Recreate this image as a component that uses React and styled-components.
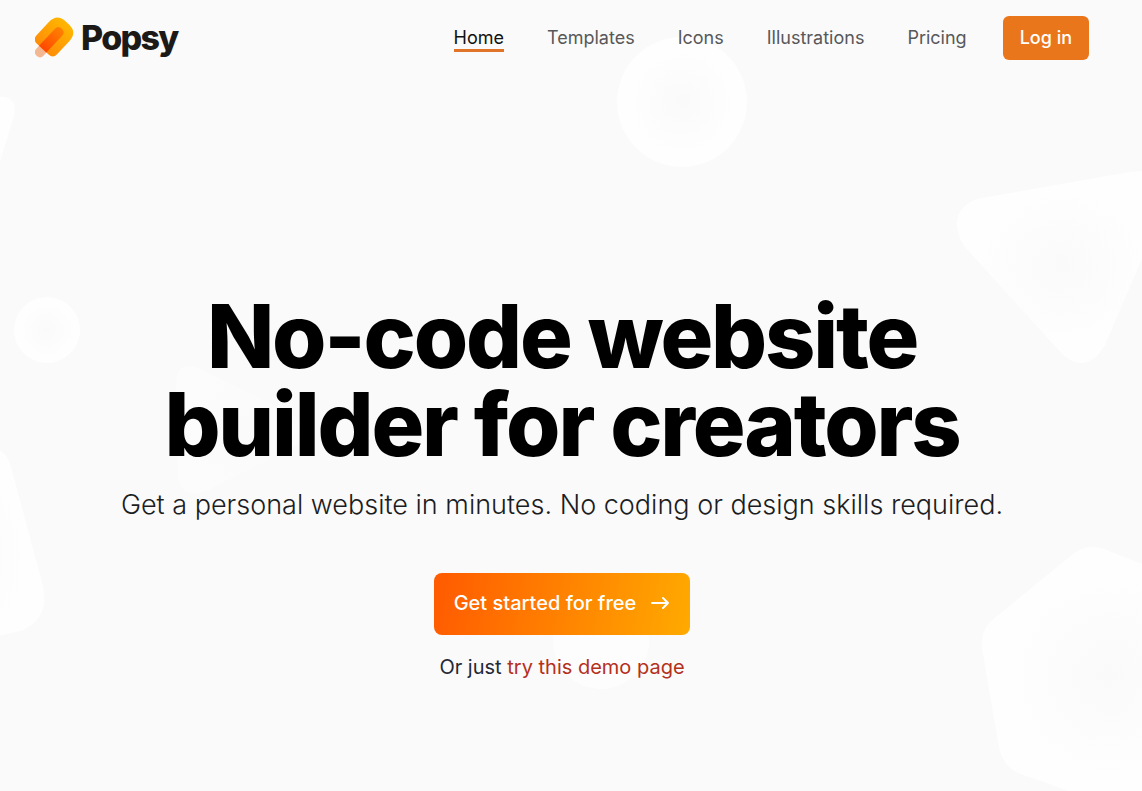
import React from "react";
import styled, { createGlobalStyle } from "styled-components";

const GlobalStyle = createGlobalStyle`
  *, *::before, *::after { box-sizing: border-box; }
  html { background: #fafafa; }
  body {
    margin: 0;
    font-family: Inter, "Liberation Sans", sans-serif;
    color: #1f2937;
  }
`;

const Page = styled.div`
  position: relative;
  min-height: 100vh;
  padding-right: 18px;
  overflow: hidden;
`;

const Backdrop = styled.svg`
  position: absolute;
  inset: 0;
  width: 100%;
  height: 100%;
`;

const Header = styled.header`
  position: relative;
  display: flex;
  align-items: center;
  justify-content: space-between;
  padding: 16px 35px 0;
`;

const Brand = styled.a`
  display: flex;
  align-items: center;
  gap: 5px;
  color: #1c1917;
  font-size: 34px;
  font-weight: 800;
  line-height: 44px;
  letter-spacing: -0.05em;
  text-decoration: none;
`;

const Nav = styled.nav`
  display: flex;
  align-items: center;
  gap: 43px;
`;

const NavLink = styled.a`
  padding-top: 3px;
  border-bottom: 3px solid ${(p) => (p.$active ? "#e0752a" : "transparent")};
  color: ${(p) => (p.$active ? "#111111" : "#57585a")};
  font-size: 18px;
  line-height: 22px;
  text-decoration: none;
`;

const LoginButton = styled.button`
  height: 44px;
  margin-left: -7px;
  padding: 0 17px;
  border: 0;
  border-radius: 6px;
  background: #ea761b;
  color: #fff;
  font: 500 18px/24px Inter, "Liberation Sans", sans-serif;
  cursor: pointer;
`;

const Hero = styled.main`
  position: relative;
  display: flex;
  flex-direction: column;
  align-items: center;
  padding: 232px 24px 48px;
  text-align: center;
`;

const Title = styled.h1`
  max-width: 900px;
  margin: 0;
  color: #000;
  font-size: 88px;
  font-weight: 800;
  line-height: 88px;
  letter-spacing: -0.025em;
`;

const Subtitle = styled.p`
  margin: 17px 0 48px;
  color: #1c1d1f;
  font-size: 27px;
  font-weight: 300;
  line-height: 40px;
`;

const StartButton = styled.button`
  display: flex;
  align-items: center;
  gap: 14px;
  height: 62px;
  padding: 0 20px 2px;
  border: 0;
  border-radius: 8px;
  background: linear-gradient(100deg, #ff5a00, #ffaa00);
  color: #fff;
  font: 500 20px/28px Inter, "Liberation Sans", sans-serif;
  cursor: pointer;
`;

const DemoNote = styled.p`
  margin: 18px 0 0;
  font-size: 20px;
  line-height: 28px;
`;

const DemoLink = styled.a`
  color: #b5301a;
  text-decoration: none;
`;

const links = ["Home", "Templates", "Icons", "Illustrations", "Pricing"];

function Shapes() {
  return (
    <Backdrop viewBox="0 0 1142 791" preserveAspectRatio="xMidYMin slice" aria-hidden="true">
      <defs>
        <radialGradient id="glow">
          <stop offset="0" stopColor="#fafafa" />
          <stop offset="0.8" stopColor="#fefefe" />
          <stop offset="1" stopColor="#fefefe" />
        </radialGradient>
        <radialGradient id="faint">
          <stop offset="0" stopColor="#fafafa" />
          <stop offset="1" stopColor="#fcfcfc" />
        </radialGradient>
      </defs>
      <circle cx="682" cy="102" r="65" fill="url(#glow)" />
      <circle cx="47" cy="330" r="33" fill="url(#glow)" />
      <circle cx="601" cy="641" r="48" fill="#fdfdfd" />
      <path d="M0 97Q18 96 14 116L0 162Z" fill="#fefefe" />
      <path d="M976 199L1130 172Q1172 166 1165 205L1105 345Q1088 374 1064 356L964 246Q945 213 976 199Z" fill="url(#glow)" />
      <path d="M176 385Q176 360 198 368L288 412Q316 428 292 448L208 490Q180 502 178 474Z" fill="url(#faint)" />
      <path d="M-130 460L-10 448Q5 447 11 467L43 586Q50 620 20 631L-130 665Z" fill="url(#glow)" />
      <path d="M991 621L1073 554Q1087 543 1104 549L1220 594Q1236 601 1236 620L1230 740Q1228 760 1210 770L1110 805Q1098 808 1080 795L1018 773Q1001 765 998 742L982 648Q980 632 991 621Z" fill="url(#glow)" />
    </Backdrop>
  );
}

function PopsicleIcon() {
  return (
    <svg width="41" height="42" viewBox="0 0 41 42" aria-hidden="true">
      <defs>
        <linearGradient id="ice" x1="0" y1="0" x2="0" y2="1">
          <stop offset="0" stopColor="#ffb700" />
          <stop offset="1" stopColor="#ff8c08" />
        </linearGradient>
        <linearGradient id="core" x1="0" y1="0" x2="0" y2="1">
          <stop offset="0" stopColor="#ff8200" />
          <stop offset="1" stopColor="#ff4800" />
        </linearGradient>
      </defs>
      <g transform="translate(20 19) rotate(43)">
        <path d="M-5 15H5V22Q5 27 0 27Q-5 27 -5 22Z" fill="#f3b892" />
        <path d="M-14 -6Q-14 -18 -2 -18H2Q14 -18 14 -6V12Q14 18 8 18H-8Q-14 18 -14 12Z" fill="url(#ice)" />
        <path d="M-5 18V-5Q-5 -10 0 -10Q5 -10 5 -5V18Z" fill="url(#core)" />
      </g>
    </svg>
  );
}

export default function App() {
  return (
    <Page>
      <GlobalStyle />
      <Shapes />
      <Header>
        <Brand href="#">
          <PopsicleIcon />
          Popsy
        </Brand>
        <Nav>
          {links.map((label, i) => (
            <NavLink key={label} href="#" $active={i === 0}>
              {label}
            </NavLink>
          ))}
          <LoginButton type="button">Log in</LoginButton>
        </Nav>
      </Header>
      <Hero>
        <Title>No-code website builder for creators</Title>
        <Subtitle>Get a personal website in minutes. No coding or design skills required.</Subtitle>
        <StartButton type="button">
          Get started for free
          <svg width="20" height="20" viewBox="0 0 20 20" fill="none" stroke="currentColor" strokeWidth="2" strokeLinecap="round" strokeLinejoin="round" aria-hidden="true">
            <path d="M2 10h16M13 5l5 5-5 5" />
          </svg>
        </StartButton>
        <DemoNote>
          Or just <DemoLink href="#">try this demo page</DemoLink>
        </DemoNote>
      </Hero>
    </Page>
  );
}
